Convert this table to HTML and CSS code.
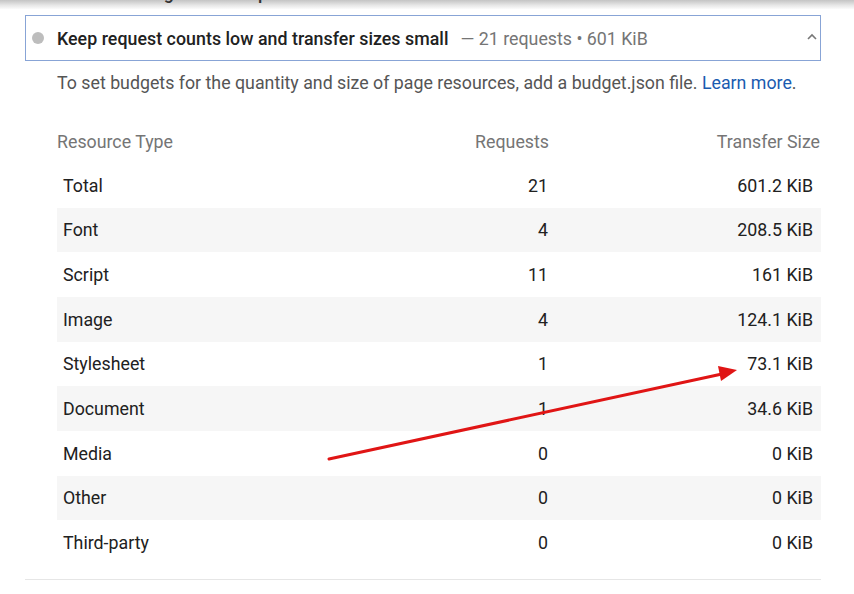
FILE: index.html
```html
<!DOCTYPE html>
<html>
<head>
<meta charset="utf-8">
<link rel="stylesheet" href="styles.css">
</head>
<body>
<div class="topbar"><span class="toptext">Avoid chaining critical requests</span></div>
<div class="audit">
  <div class="summary">
    <span class="dot"></span>
    <span class="title">Keep request counts low and transfer sizes small</span>
    <span class="display">— 21 requests • 601 KiB</span>
    <svg class="chev" width="12" height="8" viewBox="0 0 12 8"><path d="M2 6 L6 2 L10 6" fill="none" stroke="#777" stroke-width="1.6"/></svg>
  </div>
  <p class="desc">To set budgets for the quantity and size of page resources, add a budget.json file. <a class="link">Learn more</a>.</p>
  <div class="table">
    <div class="row head"><div class="c1">Resource Type</div><div class="c2">Requests</div><div class="c3">Transfer Size</div></div>
    <div class="row"><div class="c1">Total</div><div class="c2">21</div><div class="c3">601.2 KiB</div></div>
    <div class="row alt"><div class="c1">Font</div><div class="c2">4</div><div class="c3">208.5 KiB</div></div>
    <div class="row"><div class="c1">Script</div><div class="c2">11</div><div class="c3">161 KiB</div></div>
    <div class="row alt"><div class="c1">Image</div><div class="c2">4</div><div class="c3">124.1 KiB</div></div>
    <div class="row"><div class="c1">Stylesheet</div><div class="c2">1</div><div class="c3">73.1 KiB</div></div>
    <div class="row alt"><div class="c1">Document</div><div class="c2">1</div><div class="c3">34.6 KiB</div></div>
    <div class="row"><div class="c1">Media</div><div class="c2">0</div><div class="c3">0 KiB</div></div>
    <div class="row alt"><div class="c1">Other</div><div class="c2">0</div><div class="c3">0 KiB</div></div>
    <div class="row"><div class="c1">Third-party</div><div class="c2">0</div><div class="c3">0 KiB</div></div>
  </div>
  <div class="rule"></div>
</div>
<svg class="arrow" width="854" height="594" viewBox="0 0 854 594">
  <line x1="329" y1="459" x2="722" y2="374" stroke="#e01515" stroke-width="3" stroke-linecap="round"/>
  <polygon points="737,370 718,366 721,381" fill="#e01515"/>
</svg>
</body>
</html>
```
FILE: styles.css
```css
html, body {
  margin: 0;
  padding: 0;
  background: #fff;
}
body {
  font-family: Roboto, "Liberation Sans", sans-serif;
  font-size: 17.8px;
  color: #212121;
  width: 854px;
  height: 594px;
  overflow: hidden;
  position: relative;
}
.topbar {
  height: 9px;
  overflow: hidden;
  background: linear-gradient(#c4c4c4, #e8e8e8 60%, #fbfbfb);
  position: relative;
}
.toptext {
  position: absolute;
  left: 57px;
  top: -18px;
  font-weight: 500;
  color: #333;
  white-space: nowrap;
}
.audit {
  width: 796px;
  margin-left: 25px;
}
.summary {
  margin-top: 6px;
  height: 44px;
  border: 1px solid #88a4d6;
  display: flex;
  align-items: center;
  padding: 0 2px 0 6px;
}
.dot {
  width: 12px;
  height: 12px;
  border-radius: 50%;
  background: #bdbdbd;
  margin-right: 13px;
}
.title {
  font-weight: 500;
  color: #212121;
  letter-spacing: 0.04px;
}
.display {
  color: #757575;
  margin-left: 12px;
  flex: 1;
}
.chev {
  margin-top: -2px;
}
.desc {
  margin: 10px 0 0 32px;
  line-height: 24px;
  color: #555;
}
.link {
  color: #1a5bb0;
}
.table {
  margin: 24px 0 0 32px;
  width: 764px;
}
.row {
  display: grid;
  grid-template-columns: 1fr 190px 266px;
  align-items: center;
  height: 44.67px;
}
.row.head {
  height: 44px;
  color: #757575;
}
.row.alt {
  background: #f6f6f6;
}
.c2, .c3 {
  text-align: right;
}
.row .c1 { padding-left: 6px; }
.row .c2 { padding-right: 7px; }
.row .c3 { padding-right: 8px; }
.row.head .c1 { padding-left: 0; }
.row.head .c2 { padding-right: 6px; }
.row.head .c3 { padding-right: 1px; }
.rule {
  margin-top: 14px;
  border-top: 1px solid #e6e6e6;
}
.arrow {
  position: absolute;
  left: 0;
  top: 0;
  pointer-events: none;
}
```
